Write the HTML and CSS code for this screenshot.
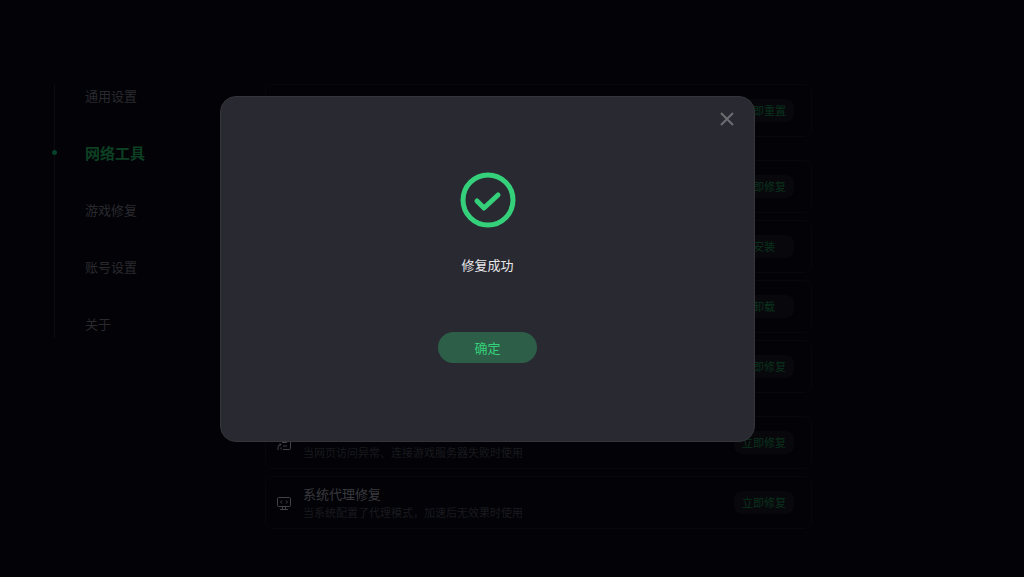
FILE: index.html
```html
<!DOCTYPE html>
<html lang="zh-CN">
<head>
    <meta charset="UTF-8">
    <meta name="viewport" content="width=device-width, initial-scale=1.0">
    <title>网络工具</title>
    <link rel="stylesheet" href="styles.css">
</head>
<body>
    <div class="page">
        <nav class="sidebar">
            <a href="#">通用设置</a>
            <a href="#" class="active">网络工具</a>
            <a href="#">游戏修复</a>
            <a href="#">账号设置</a>
            <a href="#">关于</a>
        </nav>
        <main class="content">
            <section class="group">
                <div class="card">
                    <button class="action" type="button">立即重置</button>
                </div>
            </section>
            <section class="group">
                <div class="card">
                    <button class="action" type="button">立即修复</button>
                </div>
                <div class="card">
                    <button class="action" type="button">安装</button>
                </div>
                <div class="card">
                    <button class="action" type="button">卸载</button>
                </div>
                <div class="card">
                    <button class="action" type="button">立即修复</button>
                </div>
            </section>
            <section class="group">
                <div class="card">
                    <svg class="icon" viewBox="0 0 16 16">
                        <path d="M2 6V3a1 1 0 0 1 1-1h10.500a1 1 0 0 1 1 1v10.500a1 1 0 0 1-1 1H7M6 7.500h5M7 11h4M2 15v-2.500a3 3 0 0 1 3-3M3.500 8L5 9.500 3.500 11M5 12.500v2"/>
                    </svg>
                    <div class="info">
                        <p class="desc">当网页访问异常、连接游戏服务器失败时使用</p>
                    </div>
                    <button class="action" type="button">立即修复</button>
                </div>
                <div class="card">
                    <svg class="icon" viewBox="0 0 16 16">
                        <path d="M2.500 2.500h11a1 1 0 0 1 1 1v7a1 1 0 0 1-1 1h-11a1 1 0 0 1-1-1v-7a1 1 0 0 1 1-1zM6 5.500L4.500 7 6 8.500M10 5.500L11.500 7 10 8.500M6.500 11.500v3M9.500 11.500v3M4 14.500h8"/>
                    </svg>
                    <div class="info">
                        <h3 class="name">系统代理修复</h3>
                        <p class="desc">当系统配置了代理模式，加速后无效果时使用</p>
                    </div>
                    <button class="action" type="button">立即修复</button>
                </div>
            </section>
        </main>
    </div>

    <div class="dialog" role="dialog" aria-label="修复成功">
        <button class="close" type="button" aria-label="关闭">
            <svg viewBox="0 0 14 14"><path d="M1 1l12 12M13 1L1 13"/></svg>
        </button>
        <svg class="success" viewBox="0 0 56 56">
            <circle cx="28" cy="28" r="25"/>
            <path d="M17 29l7 7 14-13"/>
        </svg>
        <p class="message">修复成功</p>
        <button class="confirm" type="button">确定</button>
    </div>
</body>
</html>
```

FILE: styles.css
```css
* {
    box-sizing: border-box;
    margin: 0;
    padding: 0;
}
body {
    background: #020207;
    color: #2a2a2e;
    font-family: "Liberation Sans", "Noto Sans CJK SC", sans-serif;
    font-size: 13px;
}
button {
    border: none;
    font-family: inherit;
    cursor: pointer;
}
.page {
    display: flex;
    align-items: flex-start;
    padding: 84px 0 0 54px;
}
.sidebar {
    display: flex;
    flex-direction: column;
    flex: none;
    gap: 31px;
    width: 211px;
    height: 254px;
    border-left: 1px solid #0b0b10;
    padding-left: 30px;
}
.sidebar a {
    position: relative;
    color: #2a2a2e;
    font-size: 13px;
    line-height: 26px;
    text-decoration: none;
}
.sidebar .active {
    color: #0d4023;
    font-size: 15px;
    font-weight: bold;
}
.sidebar .active::before {
    content: "";
    position: absolute;
    left: -33px;
    top: 9px;
    width: 5px;
    height: 5px;
    border-radius: 50%;
    background: #06402a;
}
.content {
    flex: 1;
    max-width: 547px;
}
.group {
    display: flex;
    flex-direction: column;
    gap: 7px;
    margin-bottom: 23px;
}
.card {
    display: flex;
    align-items: center;
    height: 53px;
    padding: 0 17px 0 10px;
    border: 1px solid #07070c;
    border-radius: 8px;
}
.icon {
    width: 16px;
    height: 16px;
    fill: none;
    stroke: #434347;
}
.info {
    display: flex;
    flex-direction: column;
    justify-content: flex-end;
    height: 38px;
    margin-left: 11px;
}
.name {
    color: #3a3a3e;
    font-size: 13px;
    font-weight: normal;
    line-height: 18px;
}
.desc {
    color: #1a1a1e;
    font-size: 11px;
    line-height: 18px;
}
.action {
    width: 60px;
    height: 23px;
    margin-left: auto;
    border-radius: 8px;
    background: #08080c;
    color: #0a321c;
    font-size: 11px;
    line-height: 22px;
}
.dialog {
    position: absolute;
    left: calc(50% - 292px);
    top: 96px;
    display: flex;
    flex-direction: column;
    align-items: center;
    width: 535px;
    padding: 75px 0 78px;
    border: 1px solid #343439;
    border-radius: 16px;
    background: #292932;
}
.close {
    position: absolute;
    top: 15px;
    right: 20px;
    width: 14px;
    height: 14px;
    background: none;
}
.close svg {
    display: block;
    fill: none;
    stroke: #6c6c71;
    stroke-width: 2;
}
.success {
    width: 56px;
    height: 56px;
    fill: none;
    stroke: #35d07a;
    stroke-width: 5;
    stroke-linecap: round;
    stroke-linejoin: round;
}
.message {
    margin: 28px 0 56px;
    color: #e8e8ea;
    font-size: 13px;
    line-height: 20px;
}
.confirm {
    width: 99px;
    height: 31px;
    border-radius: 16px;
    background: #2d5f48;
    color: #35d07a;
    font-size: 13px;
}
```
